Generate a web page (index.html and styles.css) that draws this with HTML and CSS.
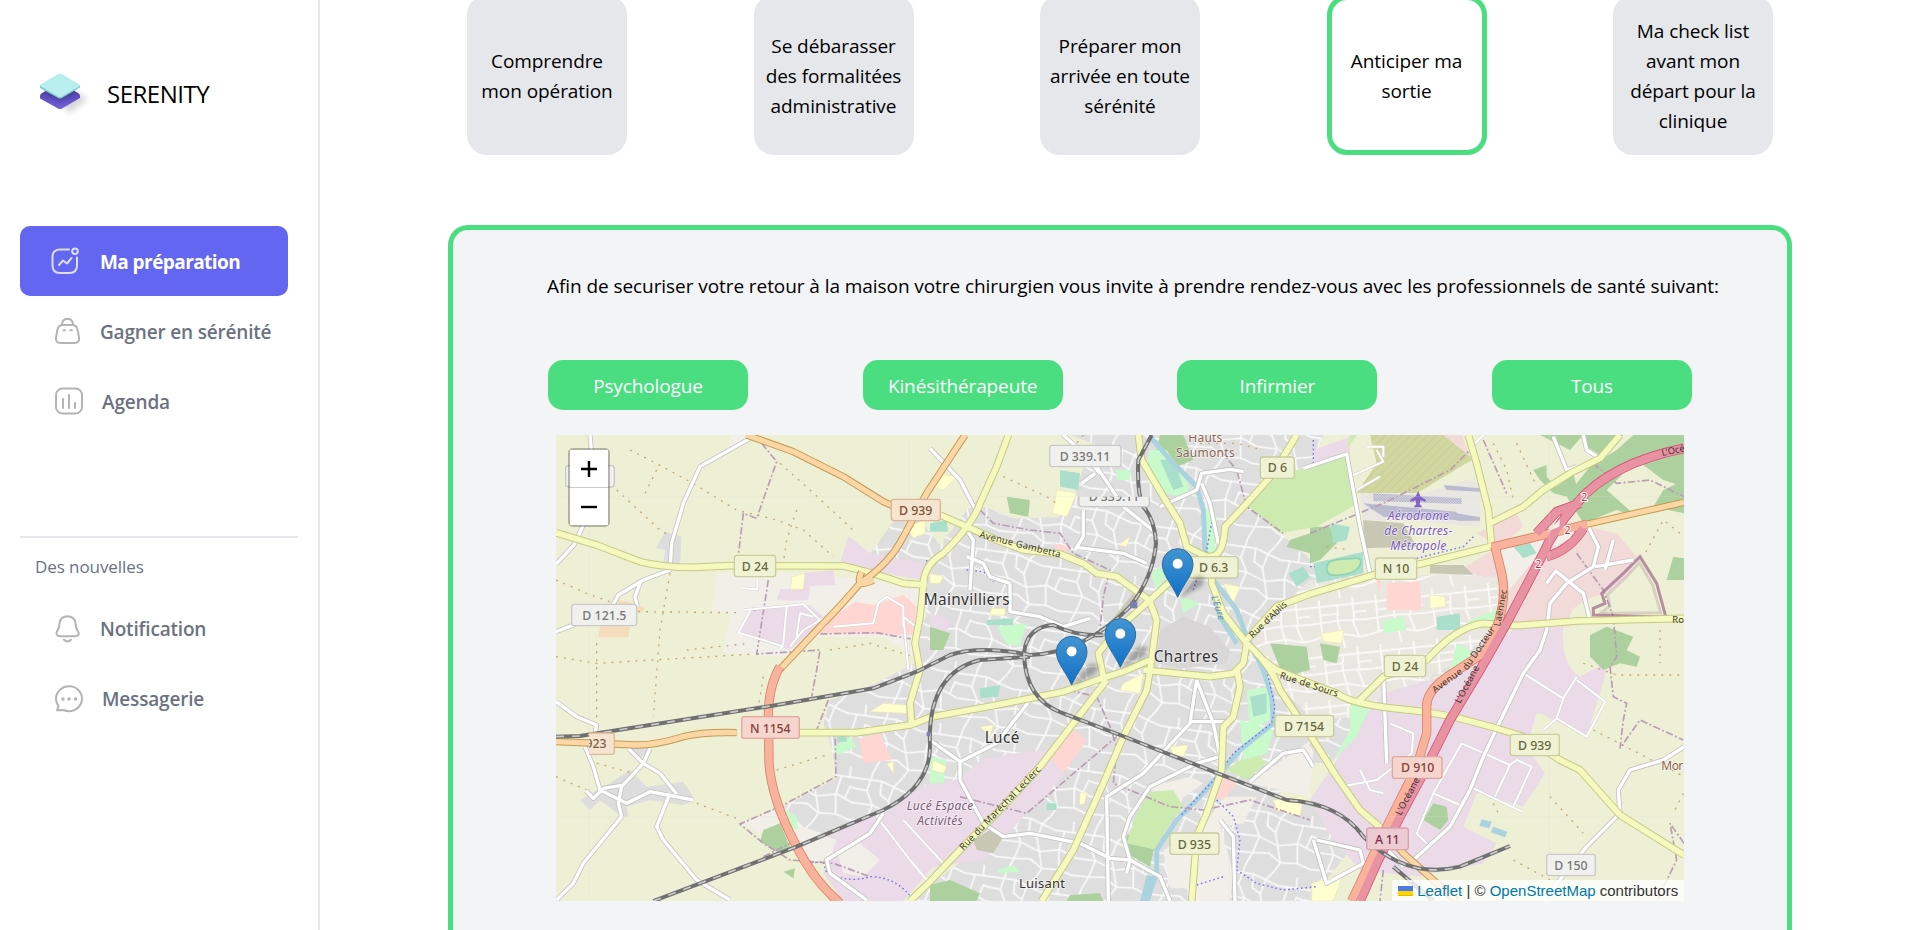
FILE: index.html
```html
<!DOCTYPE html>
<html lang="fr">
<head>
<meta charset="utf-8">
<title>Serenity</title>
<link rel="stylesheet" href="styles.css">
</head>
<body>
<aside class="sidebar">
  <div class="brand">
    <svg class="logo" width="54" height="54" viewBox="0 0 54 54">
      <defs>
        <filter id="soft" x="-50%" y="-50%" width="200%" height="200%"><feGaussianBlur stdDeviation="3"/></filter>
        <linearGradient id="violet" x1="0" y1="0" x2="0" y2="1"><stop offset="0" stop-color="#4a3da0"/><stop offset="1" stop-color="#7560dc"/></linearGradient>
        <clipPath id="under"><path d="M0 23 Q0 21 2 20 L18 11 L22 11 L38 20 Q40 21 40 23 L40 24 L22 35.500 Q20 36.500 18 35.500 L1 25.500Z"/></clipPath>
      </defs>
      <path d="M14 26 L30 16 L48 26 L30 40Z" fill="#000" opacity=".16" filter="url(#soft)"/>
      <path d="M0 23 Q0 21 2 20 L18 11 L22 11 L38 20 Q40 21 40 23 L40 25 L22 35.500 Q20 36.500 18 35.500 L0 25.500Z" fill="url(#violet)"/>
      <path d="M3 17 L20 27 L37 17 L20 8Z" fill="#221c55" opacity=".6" filter="url(#soft)" clip-path="url(#under)"/>
      <path d="M0 12.500 V15 L18 25 Q20 26 22 25 L40 14.500 V12.500Z" fill="#7fc9c9"/>
      <path d="M1 11.300 L18 1 Q20 0 22 1 L39 11.300 Q40.500 12.500 39 13.500 L22 23.500 Q20 24.500 18 23.500 L1 13.500 Q-.5 12.500 1 11.300Z" fill="#b8eeee"/>
    </svg>
    <span class="brand-name">SERENITY</span>
  </div>
  <nav class="nav">
    <a class="item active">
      <svg class="icon" width="28" height="28" viewBox="0 0 28 28"><path d="M18 2.500H9Q1.500 2.500 1.500 10v8.500Q1.500 26 9 26h9.500Q26 26 26 18.500V10.500M8 18l4-4.500 4 3 4.500-5.500"/><circle cx="24" cy="4.200" r="2.800"/></svg>
      <span>Ma préparation</span>
    </a>
    <a class="item">
      <svg class="icon" width="28" height="28" viewBox="0 0 28 28"><path d="M8 8h9q4.500 0 5.500 4.500l1.500 8q.7 5.500-4.500 5.500h-14Q.5 26 1 20.500l1.500-8Q3.500 8 8 8ZM7 8q0-6 5.500-6.200Q18 2 18 8M8.500 13.300h1.500M15.500 13.300h1.500"/></svg>
      <span>Gagner en sérénité</span>
    </a>
    <a class="item wide">
      <svg class="icon" width="30" height="28" viewBox="0 0 30 28"><rect x="1" y="1.500" width="26" height="25" rx="6.500"/><path d="M8 12v9M14 8v13M20 16v5"/></svg>
      <span>Agenda</span>
    </a>
  </nav>
  <hr class="rule">
  <h2 class="heading">Des nouvelles</h2>
  <nav class="nav news">
    <a class="item">
      <svg class="icon" width="28" height="28" viewBox="0 0 28 28"><path d="M12.500 1.300q7 0 8 7 .2 5 2 7.200Q26 21 19.500 21.200h-14Q-.5 21 2.500 15.500 4.400 13 4.500 8.300q1-7 8-7ZM9 24.700q3.500 3.500 7 0"/></svg>
      <span>Notification</span>
    </a>
    <a class="item wide">
      <svg class="icon" width="30" height="28" viewBox="0 0 30 28"><path d="M3.500 21.200Q1 18 1 14A13 12.500 0 1 1 8.500 25L2 25.300 3.500 21.200"/><path class="dots" d="M8 14h.01M14 14h.01M20.500 14h.01"/></svg>
      <span>Messagerie</span>
    </a>
  </nav>
</aside>

<main class="main">
  <section class="steps">
    <div class="step">Comprendre<br>mon opération</div>
    <div class="step">Se débarasser<br>des formalitées<br>administrative</div>
    <div class="step">Préparer mon<br>arrivée en toute<br>sérénité</div>
    <div class="step current">Anticiper ma<br>sortie</div>
    <div class="step">Ma check list<br>avant mon<br>départ pour la<br>clinique</div>
  </section>
  <section class="panel">
    <p class="intro">Afin de securiser votre retour à la maison votre chirurgien vous invite à prendre rendez-vous avec les professionnels de santé suivant:</p>
    <div class="filters">
      <button class="filter">Psychologue</button>
      <button class="filter">Kinésithérapeute</button>
      <button class="filter">Infirmier</button>
      <button class="filter">Tous</button>
    </div>
    <div class="map">
      <svg class="tiles" width="1128" height="466" viewBox="18 15 3384 1398">
        <defs>
          <pattern id="streets" width="230" height="190" patternUnits="userSpaceOnUse" patternTransform="rotate(14)">
            <path class="lane" d="M0 30L70 22L150 38L230 30M0 105L60 98L120 112L180 92L230 105M40 0L34 60L60 98L52 150L40 190M110 29L104 75L120 112L140 160L128 190M128 0L110 29M180 35L176 92L190 150L230 158M0 158L52 150L100 140L140 160L190 150M200 0L205 33M70 22L76 62L104 75M205 98L212 60L230 62M0 62L34 60"/>
          </pattern>
          <pattern id="streets2" width="170" height="150" patternUnits="userSpaceOnUse" patternTransform="rotate(-6)">
            <path class="lane" d="M0 20H170M0 70L80 66L170 70M30 0V110L0 118M85 20L80 66L95 150M130 0V70M125 70L140 120L170 118M30 110L88 106L140 120M0 118L-5 118M30 45H83M130 45H170"/>
          </pattern>
          <pattern id="hatch" width="18" height="18" patternUnits="userSpaceOnUse" patternTransform="rotate(45)"><path d="M0 0V18" stroke="#dcb983" stroke-width="3"/></pattern>
          <pattern id="speck" width="8" height="8" patternUnits="userSpaceOnUse"><path d="M0 0h4v4h-4zM4 4h4v4h-4z" fill="#9f9fc6"/></pattern>
          <path id="urban" d="M960 372L1040 262L1075 225L1170 345L1270 215L1330 240L1390 265L1520 262L1560 240L1600 110L1680 60L1560 15L2320 15L2290 100L2170 150L2095 230L2190 310L2330 430L2480 440L2845 430L2850 600L2800 660L2700 720L2520 800L2450 900L2340 1000L2290 1000L2180 1100L2280 1120L2340 1160L2400 1260L2330 1350L2280 1413L1080 1413L1250 1280L1140 1080L1000 1145L830 1215L760 1190L700 1130L860 1045L845 950L820 880L840 810L980 760L1110 690L1090 600L1130 560L1120 440Z"/>
          <g id="minor">
            <path d="M120 15L128 110L100 285L72 345L18 402M600 25L450 110L400 220L365 340L360 420L280 450L205 495L180 540L70 585L18 605M272 455L255 500L262 530"/>
            <path d="M18 815L80 860L140 885L135 912M105 950L130 1010L150 1080L230 1120L300 1085L430 1110M235 955L280 1000L330 1030L380 1092M300 955L280 1000L215 1070L205 1120L215 1160L100 1300L70 1360L20 1410M360 1090L320 1190L340 1230L440 1350L540 1410M108 1082L130 1105L160 1075L215 1066"/>
            <path d="M1140 55L1230 150L1280 245M1250 300L1270 330L1260 480M1580 352L1720 370L1790 400M1600 240L1600 320L1575 360M1640 110L1720 230L1820 310M1540 15L1600 70L1650 130M1595 160L1635 130M1830 230L1940 180L1955 130L2040 118L2080 125M1955 160L1980 220L2005 340M1250 380L1300 400L1320 440L1380 460M1380 460V545L1470 560L1540 590L1620 565"/>
            <path d="M2260 115L2390 72L2430 290L2460 430M3110 280L3145 350L3130 410L3050 460L3000 520L2990 600L2970 660L2920 730L2840 895L2800 980L2760 1080L2700 1190L2590 1290M3020 425L3100 490L3120 570M2990 460L3020 420M3135 410L3250 390M3165 420L3190 330M3010 20L3050 120L3080 110M3100 15L3110 60L3150 85"/>
            <path d="M3402 950L3340 990L3240 1020L3205 1080L3210 1150L3110 1250L2980 1410"/>
            <path d="M1140 930L1230 995L1230 1050L1300 1180L1360 1220L1440 1210L1590 1240L1680 1285L1740 1290L1830 1340L1860 1413M1675 1413L1670 1100L1780 1030L1920 880L1940 750M1730 1330L1740 1290L1720 1220L1740 1160L1800 1070L1940 1000L2010 980M1940 750L1990 880L2010 980M1920 875L2040 875M2010 1170L2050 1220L2055 1413M2100 1055L2200 970L2260 960L2290 1010M1230 995L1340 940L1440 810M1000 1150L960 1210L830 1290L840 1330L950 1410M2480 1225L2560 1310"/>
            <path d="M2290 1230L2330 1360L2440 1300L2430 1260L2300 1230M2500 720L2510 1000"/>
          </g>
          <g id="lanes">
            <path d="M575 475L622 478V440M602 540L565 608L640 630L700 650M580 540L710 528L700 640L690 660M710 528L760 522L830 590M740 620L750 550L790 560M720 650L760 600L830 560M985 520L970 580L850 590M985 520L1010 500L1060 530L1060 590M1075 720L1060 560L1110 600"/>
            <path d="M2920 730L3040 805L3080 740M3080 750L3165 815L3110 920L3020 865L3040 805M2735 940L2880 1005L2835 1100M2735 940L2650 1090L2600 1210L2630 1240M2760 1070L2915 1145M2880 1005L2900 990L2945 1010L2890 1130M2650 1090L2730 1125M2980 900L3020 865M2520 880L2590 910L2585 970L2480 1050L2370 1070M2430 1020L2460 1080L2500 1090M980 1160L1080 1290L1130 1350L1180 1300L1060 1170M980 1160L1040 1120M2400 140L2500 95L2480 60M2420 180L2490 140M2450 50H2500V80M2800 15L2770 45"/>
          </g>
          <g id="tertiary">
            <path d="M18 308L140 345L270 395Q340 412 430 412L540 407L880 408Q960 425 1060 460L1130 465M1170 255L1250 290L1340 330L1420 360L1530 372L1600 400L1640 430L1700 440L1790 505L1805 520M1375 15L1340 110L1290 220Q1270 280 1180 370Q1120 405 1120 465L1110 560L1095 640L1110 720L1080 820L1085 885"/>
            <path d="M750 908L920 908L1080 885L1140 862L1340 825L1540 785L1640 750L1720 725L1800 690M1800 515L1820 570L1805 690L1790 780L1720 920L1660 1060L1570 1260L1475 1413M1670 750L1570 880L1470 1010L1340 1150L1230 1260L1140 1355L1080 1413"/>
            <path d="M1765 15L1775 90L1840 200L1890 280L1910 350L1960 375Q2020 400 2025 290L2095 215L2170 130L2240 15M1920 400L1800 510L1700 600L1645 670L1660 740M1990 380L1985 460L2020 550L2090 640L2080 700L2050 730L1980 740L1780 720M2060 715L2070 770L2050 860L2020 890L2015 1020L1970 1150L1940 1220L1925 1413M2090 640Q2160 700 2190 780L2290 930L2360 1040L2430 1140L2500 1200"/>
            <path d="M2140 690L2180 720L2280 760L2360 790Q2400 820 2530 835L2620 845L2710 860L2840 895L2920 920L3030 990L3090 1020L3210 1155L3402 1275M2090 630L2180 530L2280 492L2470 435L2620 400L2820 350M2755 15L2780 100L2815 240L2825 350M2820 280L2920 230L2980 180L3060 130L3150 85L3210 15M2420 820L2500 740L2630 690Q2720 590 2800 580L2900 587L3080 573L3402 565"/>
          </g>
          <g id="secondary"><path d="M590 15L730 65L880 140L1000 215L1045 235M1245 15L1130 190L1060 320Q1020 400 930 460Q870 530 820 580L690 718M935 425Q910 480 970 450M18 935L260 945Q320 945 400 920Q460 905 560 908M3100 285L3402 217M2500 1200L2560 1270L2720 1413"/></g>
          <g id="primary"><path d="M690 710Q655 770 655 860L657 1000Q665 1110 740 1250Q790 1350 870 1420M2825 352L2980 315L3110 283M2835 350L2855 430Q2880 540 2800 670L2700 735Q2630 780 2630 830V910L2600 1010L2520 1170L2405 1413"/></g>
          <g id="motor"><path d="M3402 55Q3180 100 3080 220Q3010 300 2980 370L2870 580L2790 720L2700 870L2620 1030L2550 1160L2480 1300L2430 1413M3090 220L3020 245L2960 310M3100 295Q3060 360 2990 380"/></g>
          <g id="rails"><path d="M18 920L90 918L300 885L650 830L970 775L1100 725L1200 675Q1290 645 1440 675Q1600 670 1740 530Q1810 440 1818 340Q1815 270 1780 230Q1760 190 1765 90L1805 15M1660 615Q1580 620 1510 585Q1430 590 1422 670Q1425 810 1540 850L1710 915L1990 1025L2210 1110Q2370 1120 2440 1220Q2570 1350 2730 1310L2880 1248M2530 1310L2650 1413M310 1413L740 1250L1000 1140Q1140 1070 1140 950Q1130 730 1290 690L1440 680"/></g>
          <g id="pin">
            <path d="M1 3L42 -52Q62 -72 80 -58Q84 -36 50 -22Z" fill="#000" opacity=".28" filter="url(#blur)"/>
            <path d="M0 0C-18 -42 -46 -66 -46 -100A46 46 0 0 1 46 -100C46 -66 18 -42 0 0Z" fill="url(#blue)" stroke="#2d6da0" stroke-width="3"/>
            <circle cy="-101" r="16" fill="#fff" stroke="#3478ab" stroke-width="2"/>
          </g>
          <filter id="blur" x="-40%" y="-40%" width="180%" height="180%"><feGaussianBlur stdDeviation="6"/></filter>
          <linearGradient id="blue" x1="0" y1="0" x2="0" y2="1"><stop offset="0" stop-color="#4196d2"/><stop offset="1" stop-color="#126fc6"/></linearGradient>
          <clipPath id="halfLow"><rect x="1580" y="200" width="230" height="60"/></clipPath>
          <clipPath id="halfRight"><rect x="118" y="890" width="100" height="100"/></clipPath>
        </defs>
        <rect x="0" y="0" width="3420" height="1430" fill="#eef0d5"/>
        <!-- Bare land, settlements -->
        <g fill="#f2efe9">
          <path d="M545 15L600 15L590 40L530 60ZM500 430L770 430L1130 470L1120 700L1000 620L800 620L700 680L520 670L540 550L485 545ZM2080 230L2190 310L2330 430L2330 600L2180 640L2080 500L2060 330ZM2850 360L3100 290L3000 480L2860 600ZM700 1130L830 1210L850 1250L800 1300L700 1240L570 1180Z"/>
        </g>
        <path d="M345 305L395 320L390 400L340 405L345 360L318 355ZM90 1110L180 1060L240 1020L290 1070L400 1055L435 1110L400 1125L300 1110L230 1130L235 1160L215 1160L150 1110L120 1140ZM240 950L300 955L270 985Z" fill="#dddddd"/>
        <use href="#urban" fill="#dfdede"/>
        <use href="#urban" fill="url(#streets)"/>
        <path d="M2280 450L2840 430L2850 590L2700 710L2520 800L2430 860L2290 870L2170 750L2100 620Z" fill="#eae7e1"/>
        <path d="M2280 450L2840 430L2850 590L2700 710L2520 800L2430 860L2290 870L2170 750L2100 620Z" fill="url(#streets2)"/>
        <path d="M1960 1190L2020 1100L2120 1100L2080 1180L2010 1190L2050 1330L2040 1413H1930V1375H1860L1840 1260ZM1800 1070L1920 1040L1960 1060L1860 1130ZM2270 940L2100 1060L2280 1100L2290 960Z" fill="#f2efe9"/>
        <!-- Old town -->
        <path d="M1830 600L1900 560L1980 590L2040 660L2030 700L1900 715L1820 700Z" fill="#d8d6d6"/>
        <!-- Industry -->
        <g fill="#ebdbe8">
          <path d="M895 318L960 370L1125 400L1115 450L1000 430L870 400ZM765 428L850 420L856 465L780 468L775 510L715 512L680 508L690 478L760 475ZM600 540L780 525L830 570L780 610L720 660L620 630L570 610Z"/>
          <path d="M830 1220L1000 1140L1140 1060L1230 1050L1290 990L1400 970L1490 960L1540 1030L1480 1110L1430 1150L1300 1290L1150 1310L1060 1413L880 1413L820 1330L850 1260Z"/>
          <path d="M2900 590L3040 590Q3030 700 3090 740L3180 690L3110 920L2970 850L2930 950L2985 1030L2920 1130L2780 1090L2740 1190L2840 1240L2800 1300L2600 1340L2430 1320L2350 1230L2280 1110L2380 960L2500 790L2740 720Z"/>
          <path d="M2290 60L2400 20L2400 70L2290 110ZM1140 550L1200 570L1190 610L1140 600Z"/>
        </g>
        <path d="M2960 850L3030 880L2970 960L2930 950ZM2770 1130L2790 1080L2870 1130L2800 1200L2740 1190Z" fill="#eef0d5"/>
        <path d="M860 1260L930 1240L990 1290L940 1340L880 1330ZM700 1160L770 1200L860 1230L840 1280L760 1280L720 1230Z" fill="#f2efe9"/>
        <path d="M2870 490L2960 380L3110 290L3200 310L3260 380L3240 430L3170 490Q3040 520 3060 590L2880 590ZM2780 310L2900 250L2920 290L2850 350ZM2730 420L2820 365L2860 440L2800 440Z" fill="#f2dad9"/>
        <!-- Commerce -->
        <g fill="#ffd6d1">
          <path d="M915 515L970 525L1060 495L1100 530L1090 615L810 610L850 560ZM928 925L990 910L1025 990L940 1000ZM2510 460L2610 455L2615 540L2510 540ZM2475 430L2495 430L2490 495ZM1500 980L1570 900L1610 930L1540 1030ZM2020 1040L2060 1060L2020 1110L1990 1100ZM1510 340L1565 350L1550 365L1520 358Z"/>
        </g>
        <path d="M205 510L235 515L285 535L270 550L230 545L220 590L240 590L235 622H145L150 590L190 588Z" fill="#f5dcba"/>
        <!-- Woods and meadows -->
        <g fill="#add19e">
          <path d="M2970 15L3100 15L3060 60ZM3105 15L3220 15L3160 80L3110 50ZM3120 110L3200 60L3250 15H3402V170L3340 150L3260 90L3170 180L3260 260L3200 240L3100 280L3050 200L3080 160ZM3340 180L3402 150V250L3310 230ZM2950 120L2990 105L2990 140L3020 170L3070 130L3090 210L3010 190L2970 150ZM3370 380L3402 385V450L3350 450Z"/>
          <path d="M1370 200L1440 210L1435 260L1380 250ZM2280 290H2340L2360 340L2310 390L2280 400ZM2310 640L2370 650L2360 700L2320 690ZM2160 640L2270 650L2280 720L2200 740ZM3120 615L3170 590L3250 620L3230 660L3270 680L3260 710L3210 700L3160 720L3120 680ZM640 1200L690 1180L720 1250L690 1270L630 1235ZM2650 1120L2690 1130L2695 1170L2670 1200L2620 1170ZM700 1325L735 1315L730 1345ZM1730 1215L1820 1220L1800 1310L1730 1270ZM1830 15H1900L1930 90L1880 110L1820 60ZM1140 1365L1200 1350L1290 1390L1280 1413H1140ZM1560 1395L1650 1390L1660 1413H1550ZM1140 590L1200 610L1180 660H1140ZM2220 330L2280 310V370L2210 350Z"/>
        </g>
        <g fill="#cdebb0">
          <path d="M2170 150L2290 100L2390 80L2425 220L2300 290L2190 310L2095 230ZM1800 1085L1870 1080L1900 1130L1860 1180L1820 1260L1730 1240L1760 1150ZM2030 1020L2110 960L2150 1000L2090 1050ZM2400 15H2420L2390 60Z"/>
        </g>
        <path d="M2460 15L2730 15L2765 90L2600 190L2420 190L2480 100Z" fill="#cfd8a0"/>
        <path d="M2460 15L2730 15L2765 90L2600 190L2420 190L2480 100Z" fill="url(#hatch)"/>
        <path d="M2680 15L2735 15L2760 80Z" fill="#f2dad9"/>
        <!-- Parks, pitches, schools -->
        <g fill="#c8facc">
          <path d="M1800 60L1850 60L1920 170L1900 200L1840 190L1790 100ZM1700 120H1740V150H1700ZM1960 230L2000 260L1995 370L1960 380ZM1890 500L1950 520L1900 550ZM1800 430L1850 400V440L1820 480ZM2500 570L2560 560L2570 600L2500 610ZM2460 830L2420 920L2350 990L2400 900L2400 820ZM1340 590L1430 580L1410 650L1370 640ZM1140 980L1190 990L1180 1060H1140ZM2070 870L2170 900L2150 970L2080 990ZM850 950L900 920L920 950L860 975Z"/>
          <path d="M2090 780L2160 770L2160 870L2100 900ZM2760 570L2840 540V590L2740 600ZM700 1135L740 1160L745 1200L710 1190ZM1340 1320L1390 1305L1410 1325L1350 1330ZM2720 640L2760 660V700L2700 720Z"/>
        </g>
        <g fill="#aae0cb">
          <path d="M2290 400L2440 365V430L2300 460ZM1530 120L1590 130L1585 180L1530 170ZM1830 90L1870 85L1900 170L1870 180ZM1290 775L1350 765L1345 800L1290 805ZM1140 280L1190 270L1195 305H1140ZM2215 430L2260 410L2280 440L2240 470ZM2660 560L2730 550V600L2660 600ZM2100 800L2150 790V850L2110 860ZM2890 350L2940 340L2960 370L2920 385ZM1310 570L1390 565V585H1310ZM865 915H890V935H860ZM2340 280L2400 290L2390 330L2350 340ZM1490 1120H1520V1140H1490Z"/>
        </g>
        <path d="M2330 415Q2330 390 2370 388L2410 385Q2440 380 2430 405Q2420 430 2370 435Q2330 440 2330 415Z" fill="#cdebb0" stroke="#8cd2b4" stroke-width="5"/>
        <g fill="#ffffd0" stroke="#efe2b6" stroke-width="2">
          <path d="M1520 180L1580 190L1550 260L1508 250ZM1070 290L1125 270V310L1090 325ZM1150 130L1220 140L1180 180L1150 170ZM1705 345L1740 320L1730 350ZM2020 460L2070 470L2050 520ZM2640 495L2685 500V530L2640 535ZM2315 610L2380 600L2375 640L2320 635ZM1720 760L1780 730L1770 790L1710 780ZM1000 820L1070 825V850L960 845ZM1010 1000L1030 995V1030ZM2170 1110L2260 1100L2250 1160L2180 1140ZM1150 990L1190 1010L1180 1030L1145 1020ZM1325 535H1365V555H1320ZM1860 950L1915 945L1900 980L1870 975ZM1590 1090L1610 1085L1605 1120L1588 1125ZM2285 1360L2380 1330L2350 1413H2285ZM1140 430L1180 440L1170 460H1140ZM1290 890L1330 885L1320 920ZM725 440L765 430L760 478L722 478Z"/>
        </g>
        <path d="M2440 270L2560 280L2600 350L2440 355ZM2640 405L2740 405L2770 435L2640 430ZM1660 600L1750 490L1770 510L1700 560ZM1270 1230L1320 1200L1360 1220L1330 1270L1280 1260Z" fill="#c7c7b4"/>
        <path d="M2430 190L2620 190L2750 150L2795 160L2790 290L2620 275L2440 270Z" fill="#e9e7e2"/>
        <path d="M2470 190L2735 205V222L2470 213Z" fill="url(#speck)"/>
        <path d="M2440 220L2720 245V270L2500 260ZM2680 165L2790 175V185L2690 180ZM2720 250L2790 262V272H2720Z" fill="#bbbbd0"/>
        <path d="M2605 183l6 16 16 10v6l-16-4-2 12 6 5v4h-22v-4l6-5-2-12-16 4v-6l16-10z" fill="#8461c4"/>
        <!-- Water -->
        <path d="M1800 20L1870 100L1940 170L1960 240L1965 360L1990 460L2010 560L2060 640M1990 450L2060 540L2090 620L2140 720L2165 800L2170 880L2070 960L2010 1030L1950 1100L1880 1170L1820 1260L1820 1330L1790 1413" fill="none" stroke="#aad3df" stroke-width="15"/>
        <path d="M1790 1335L1820 1340L1800 1413H1770ZM2795 1168L2825 1175L2818 1195L2788 1188ZM2830 1190L2872 1205L2865 1222L2822 1207Z" fill="#aad3df"/>
        <g class="footways"><path d="M600 542L710 528L760 524M600 542L570 600M770 1300L820 1295L830 1330Q900 1360 960 1340Q1040 1340 1090 1410M1990 250L1970 360L1930 480M2150 720L2175 830L2165 880L2050 970L2000 1040L1890 1160M2000 1110L2050 1160L2070 1230L2060 1320L2120 1360L2200 1380L2300 1370M1940 1365L2020 1340M2600 385L2740 350L2770 320M1130 390L1125 460M1250 420L1300 425L1330 455M2280 410H2295M2290 30V100"/></g>
        <g class="tracks"><path d="M240 60L300 90L420 155L560 240L680 270L760 300L850 380M200 180L330 300L380 330M320 120L280 200M18 450L110 490L260 545L570 548M690 100L780 180L920 310M740 240L710 330L700 400M360 430L330 600L310 860M140 640L140 900M18 680L140 700L480 680L610 672M410 660L600 640M640 740L620 860M18 1040L110 1080M140 1000L250 1030M440 1120L560 1165M680 1020L830 975M840 660L960 640L1090 680M1360 140L1490 200L1520 220M1600 15L1540 90M2830 40L2870 120L2890 210M2900 40L2960 170M3390 310L3340 270L3280 380M3330 600L3330 700M3100 700L3200 735H3402M3000 1100L3100 1210M2830 1120L2850 1160M3130 900L3402 1040M3400 1090L3370 1150M2890 1290L3000 1350M1950 40H2060L2140 60M2330 350L2400 360"/></g>
        <g class="limits"><path d="M635 40L680 95L620 265L580 250L565 375M655 450L620 672L810 660L800 720L785 800M810 612L980 608L1100 630M835 810L800 900L855 910L858 1040L700 1125L570 1182L640 1240L720 1290L850 1300L960 1340M640 1280L720 1240M1290 240L1330 280L1440 300L1530 310L1570 370L1680 420L1660 500L1650 600M1555 780L1640 800L1680 890L1700 950L1690 1060L1860 1130L1960 1140L2100 1110L2280 1170M1230 1100L1430 1150L1700 920M2280 310L2500 220L2700 120L2760 60M2800 30L2870 190M3080 370L3160 480L3190 560L3200 680L3180 710L3190 800L3230 820L3220 870L3210 955L3270 870L3400 930M3402 1240L3360 1180L3380 1290L3320 1413M2010 60L2060 120L2090 230L2200 310M3130 100L3200 160L3300 150L3402 200M2500 1320L2490 1413"/></g>
        <path d="M3130 555L3130 535L3165 520L3155 490L3220 430L3270 380L3320 460L3348 562L3130 555Z" fill="none" stroke="#a0708c" stroke-width="9" opacity=".75"/>
        <path d="M3152 550L3180 528L3172 495L3230 440L3268 398L3308 465L3332 548Z" fill="none" stroke="#a0708c" stroke-width="9" opacity=".25"/>
        <!-- Road network, casing below fill -->
        <use href="#lanes" class="lane-case"/><use href="#lanes" class="lane-fill"/>
        <use href="#minor" class="minor-case"/><use href="#minor" class="minor-fill"/>
        <use href="#tertiary" class="ter-case"/><use href="#tertiary" class="ter-fill"/>
        <use href="#secondary" class="sec-case"/><use href="#secondary" class="sec-fill"/>
        <use href="#primary" class="pri-case"/><use href="#motor" class="mot-case"/><use href="#primary" class="pri-fill"/><use href="#motor" class="mot-fill"/>
        <path d="M2990 305L3030 268L3028 290ZM3015 335L3075 300L3060 325L3018 350Z" fill="#f2efe9"/>
        <use href="#rails" class="rail"/><use href="#rails" class="rail-dash"/>
        <path d="M1740 515h22v20h-22zM1130 905h10v14h-10z" fill="#7981b0"/>
        <path d="M118 15V1413M1078 15V1413M2038 15V1413M2998 15V1413M18 200H3402M18 1160H3402" stroke="#ddd" stroke-width="2" opacity=".35"/>

        <!-- Road numbers -->
        <g class="shield grey"><rect x="47" y="107" width="146" height="64" rx="8"/><rect x="65" y="523" width="195" height="64" rx="8"/><rect x="1499" y="46" width="214" height="64" rx="8"/><rect x="2990" y="1273" width="146" height="64" rx="8"/></g>
        <g clip-path="url(#halfLow)"><g class="shield grey"><rect x="1587" y="166" width="211" height="64" rx="8"/></g><text class="num grey-text" x="1692" y="213" textLength="152">D 339.11</text></g>
        <g class="shield yellow"><rect x="553" y="376" width="124" height="64" rx="8"/><rect x="2131" y="81" width="102" height="64" rx="8"/><rect x="1918" y="380" width="146" height="64" rx="8"/><rect x="2476" y="384" width="124" height="64" rx="8"/><rect x="2503" y="676" width="124" height="64" rx="8"/><rect x="2175" y="856" width="176" height="64" rx="8"/><rect x="1860" y="1209" width="147" height="64" rx="8"/><rect x="2881" y="913" width="147" height="64" rx="8"/></g>
        <g class="shield orange"><rect x="1024" y="208" width="147" height="64" rx="8"/><g clip-path="url(#halfRight)"><rect x="50" y="909" width="143" height="64" rx="8"/><text class="num" x="120" y="935" dy="20" textLength="100" fill="#7a5f45">D 923</text></g></g>
        <g class="shield salmon"><rect x="575" y="860" width="173" height="65" rx="8"/><rect x="2527" y="980" width="149" height="65" rx="8"/></g>
        <g class="shield pink"><rect x="2450" y="1194" width="125" height="65" rx="8"/></g>
        <g class="num">
          <g fill="#777"><text x="163" y="570" textLength="132">D 121.5</text><text x="1605" y="94" textLength="152">D 339.11</text><text x="3063" y="1319" textLength="100">D 150</text></g>
          <g fill="#65693f"><text x="615" y="423" textLength="80">D 24</text><text x="2182" y="127" textLength="58">D 6</text><text x="1991" y="427" textLength="88">D 6.3</text><text x="2538" y="430" textLength="80">N 10</text><text x="2565" y="723" textLength="80">D 24</text><text x="2262" y="902" textLength="120">D 7154</text><text x="1933" y="1256" textLength="100">D 935</text><text x="2954" y="960" textLength="100">D 939</text></g>
          <text x="1097" y="255" textLength="100" fill="#7a5038">D 939</text>
          <g fill="#82433c"><text x="661" y="908" textLength="122">N 1154</text><text x="2603" y="1026" textLength="100">D 910</text></g>
          <text x="2512" y="1241" textLength="74" fill="#7d2c4a">A 11</text>
        </g>
        <!-- Places and street names -->
        <g class="town"><text x="1250" y="526" textLength="258">Mainvilliers</text><text x="1908" y="695" textLength="194">Chartres</text><text x="1356" y="938" textLength="104">Lucé</text></g>
        <text class="town small" x="1476" y="1374" textLength="138">Luisant</text>
        <g class="hamlet"><text x="1966" y="36" textLength="102">Hauts</text><text x="1966" y="80" textLength="176">Saumonts</text><text x="3367" y="1019" textLength="66">Mor</text></g>
        <g class="aero"><text x="2605" y="270" textLength="184">Aérodrome</text><text x="2605" y="315" textLength="204">de Chartres-</text><text x="2605" y="360" textLength="168">Métropole</text></g>
        <g class="zone"><text x="1170" y="1139" textLength="200">Lucé Espace</text><text x="1170" y="1184" textLength="136">Activités</text></g>
        <text class="street" transform="translate(1287 322) rotate(14)" textLength="250">Avenue Gambetta</text>
        <text class="street" transform="translate(1240 1262) rotate(-46)" textLength="336">Rue du Maréchal Leclerc</text>
        <text class="street" transform="translate(2108 626) rotate(-44)" textLength="145">Rue d'Ablis</text>
        <text class="street" transform="translate(2188 744) rotate(18)" textLength="182">Rue de Sours</text>
        <text class="street" transform="translate(2655 790) rotate(-36)" textLength="104">Avenue</text>
        <text class="street" transform="translate(2752 722) rotate(-56)" textLength="150">du Docteur</text>
        <text class="street" transform="translate(2850 590) rotate(-79)" textLength="112">Laënnec</text>
        <text class="street" transform="translate(2730 822) rotate(-62)" textLength="124">L'Océane</text>
        <text class="street" transform="translate(2552 1158) rotate(-62)" textLength="124">L'Océane</text>
        <text class="street" transform="translate(3337 78) rotate(-12)">L'Océ</text>
        <text class="street" x="3367" y="580">Ro</text>
        <text class="river" transform="translate(1984 500) rotate(73)">L'Eure</text>
        <g class="exit"><text x="3103" y="213">2</text><text x="3053" y="313">2</text><text x="2965" y="415">2</text></g>
        <use href="#pin" x="1883" y="502"/><use href="#pin" x="1711" y="712"/><use href="#pin" x="1565" y="765"/>
      </svg>
      <div class="zoom"><span><svg width="16" height="16" viewBox="0 0 16 16"><path d="M0 8h16M8 0v16"/></svg></span><span><svg width="16" height="16" viewBox="0 0 16 16"><path d="M0 8h16"/></svg></span></div>
      <div class="credit">
        <svg width="15" height="10" viewBox="0 0 15 10"><path fill="#4c7be1" d="M0 0h15v5H0z"/><path fill="#ffd500" d="M0 5h15v5H0z"/><path fill="#e0bc00" d="M0 9h15v1H0z"/></svg>
        <a>Leaflet</a> <span>| ©</span> <a>OpenStreetMap</a> <span>contributors</span>
      </div>
    </div>
  </section>
</main>
</body>
</html>
```
FILE: styles.css
```css
* { box-sizing: border-box; }
body {
  margin: 0;
  height: 930px;
  overflow: hidden;
  display: flex;
  background: #fff;
  color: #000;
  font-family: "Open Sans", "Noto Sans", sans-serif;
  font-size: 19px;
}

/* Sidebar */
.sidebar { width: 320px; height: 930px; border-right: 2px solid #e5e7eb; padding: 73px 20px 0; flex: none; }
.brand { display: flex; height: 153px; padding-left: 20px; }
.logo { flex: none; }
.brand-name { margin-left: 13px; font-size: 24px; font-weight: 400; line-height: 42px; letter-spacing: -.5px; }
.nav { display: flex; flex-direction: column; width: 268px; }
.item { display: flex; align-items: center; height: 70px; padding-left: 35px; border-radius: 10px; color: #6b7280; font-weight: 600; letter-spacing: -.18px; white-space: nowrap; }
.item span { margin: 2px 0 0 17px; }
.icon { flex: none; fill: none; stroke: #b4b4b4; stroke-width: 2; stroke-linecap: round; stroke-linejoin: round; }
.icon .dots { stroke-width: 3.4; }
.active { background: #6366f1; color: #fff; padding-left: 31px; font-weight: 700; letter-spacing: -.57px; }
.active span { margin-left: 21px; }
.active .icon { stroke: #dcdcfb; }
.rule { width: 278px; height: 2px; margin: 100px 0 0; border: 0; background: #e5e7eb; }
.heading { margin: 14px 0 0 15px; font-size: 17px; line-height: 30px; font-weight: 500; color: #6b7280; letter-spacing: -.08px; }
.news { margin-top: 12px; }
.news .item span { margin-top: 0; }

/* Steps */
.main { flex: 1; display: flex; flex-direction: column; align-items: center; }
.steps { width: 1306px; margin-top: -5px; display: flex; justify-content: space-between; flex: none; }
.step { width: 160px; height: 160px; border-radius: 20px; background: #e5e7eb; display: flex; align-items: center; justify-content: center; text-align: center; line-height: 30px; letter-spacing: -.08px; padding-top: 2px; white-space: nowrap; }
.current { background: #fff; border: 5px solid #4ade80; }

/* Panel runs to the bottom of the window */
.panel { width: 1344px; height: 705px; flex: none; margin-top: 70px; border: 5px solid #4ade80; border-bottom: 0; border-radius: 20px 20px 0 0; background: #f3f4f6; display: flex; flex-direction: column; }
.intro { margin: 41px 0 0 94px; line-height: 30px; white-space: nowrap; letter-spacing: -.07px; }
.filters { display: flex; justify-content: space-between; margin: 59px 95px 0; }
.filter { width: 200px; height: 50px; border: 0; border-radius: 15px; background: #4ade80; color: #fff; font: inherit; letter-spacing: -.12px; padding: 1px 0 0; }
.map { position: relative; width: 1128px; height: 466px; margin: 25px 0 0 103px; overflow: hidden; }
.tiles { display: block; font-family: "Noto Sans", sans-serif; }

/* Map controls lie over the tiles */
.zoom { position: absolute; left: 12px; top: 13px; width: 42px; height: 79px; border: 2px solid rgba(0, 0, 0, .25); background-clip: padding-box; border-radius: 5px; display: flex; flex-direction: column; }
.zoom span { flex: 1; background: #fff; display: flex; align-items: center; justify-content: center; padding-top: 1px; }
.zoom span + span { border-top: 1px solid #ccc; }
.zoom svg { fill: none; stroke: #000; stroke-width: 2.4; }
.credit { position: absolute; right: 0; bottom: 0; width: 292px; height: 21px; padding-left: 6px; background: rgba(255, 255, 255, .8); font: 15px/21px "Liberation Sans", sans-serif; color: #333; white-space: nowrap; letter-spacing: 0; }
.credit a { color: #0078a8; }

/* Map linework */
.lane { fill: none; stroke: #fff; stroke-width: 5; opacity: .85; }
#lanes, #minor, #tertiary, #secondary, #primary, #motor, #rails { fill: none; stroke-linejoin: round; }
.lane-case { stroke: #d3d1d3; stroke-width: 9; }
.lane-fill { stroke: #fff; stroke-width: 6; }
.minor-case { stroke: #c4c4c2; stroke-width: 15; }
.minor-fill { stroke: #fff; stroke-width: 10; }
.ter-case { stroke: #c5c984; stroke-width: 23; }
.ter-fill { stroke: #f6f9be; stroke-width: 17; }
.sec-case { stroke: #c39a52; stroke-width: 22; }
.sec-fill { stroke: #fcd6a4; stroke-width: 16; }
.pri-case { stroke: #d98268; stroke-width: 28; }
.pri-fill { stroke: #f9b29c; stroke-width: 23; }
.mot-case { stroke: #d3567a; stroke-width: 29; }
.mot-fill { stroke: #e892a2; stroke-width: 24; }
.rail { stroke: #707070; stroke-width: 12; }
.rail-dash { stroke: #ccc; stroke-width: 5; stroke-dasharray: 24 24; }
.tracks { fill: none; stroke: #c9a66a; stroke-width: 4; stroke-dasharray: 6 18; }
.limits { fill: none; stroke: #b99db5; stroke-width: 5; stroke-dasharray: 22 7 6 7; }
.footways { fill: none; stroke: #6d70f0; stroke-width: 4; stroke-dasharray: 5 8; }

.shield rect { stroke-width: 4; }
.grey rect { fill: #f0f0ef; stroke: #c9c9c9; }
.yellow rect { fill: #f0f2d4; stroke: #c9cc9d; }
.orange rect { fill: #f7e4d0; stroke: #dcb698; }
.salmon rect { fill: #f5d5cd; stroke: #dfa79d; }
.pink rect { fill: #eccbd2; stroke: #d9a0ad; }
.num { font-size: 37px; text-anchor: middle; font-weight: 500; }
.grey-text { fill: #777; }
.town { font-size: 46px; text-anchor: middle; fill: #333; stroke: #fff; stroke-width: 5; stroke-opacity: .6; paint-order: stroke; }
.small { font-size: 39px; }
.hamlet, .aero, .zone { font-size: 36px; text-anchor: middle; stroke: #fff; stroke-width: 5; stroke-opacity: .6; paint-order: stroke; }
.hamlet { fill: #8d6450; }
.aero { fill: #7b59c0; font-style: italic; }
.zone { fill: #7a5c78; font-style: italic; }
.street { font-size: 28px; fill: #3b3a30; }
.river { font-size: 29px; font-style: italic; fill: #5a8fc0; }
.exit { font-size: 32px; fill: #b8323e; text-anchor: middle; stroke: #fff; stroke-width: 6; paint-order: stroke; }
```
